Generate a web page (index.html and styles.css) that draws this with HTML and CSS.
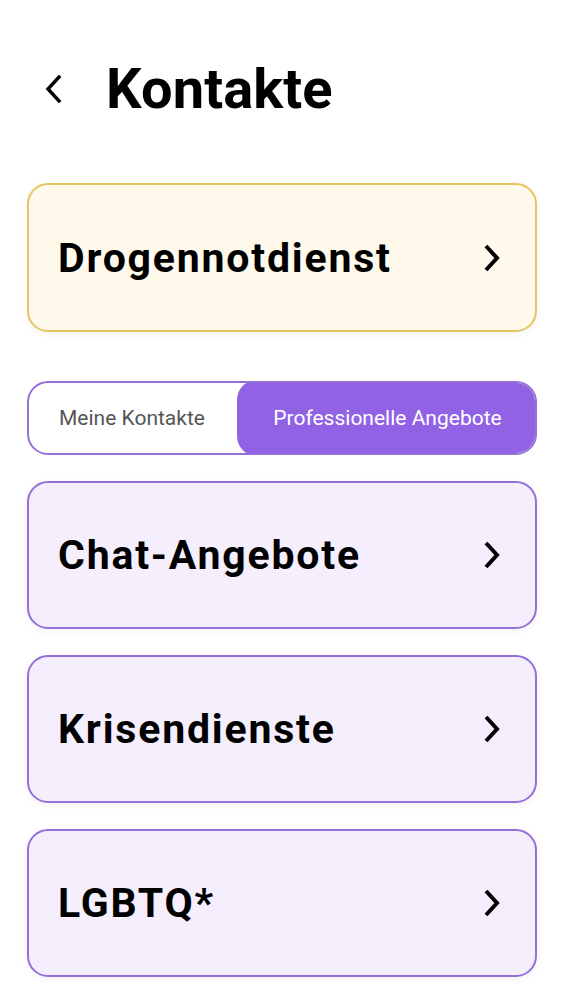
FILE: index.html
```html
<!DOCTYPE html>
<html lang="de">
<head>
  <meta charset="UTF-8" />
  <meta name="viewport" content="width=device-width, initial-scale=1.0"/>
  <title>Kontakte</title>
  <link rel="stylesheet" href="styles.css">
</head>
<body>
  <header class="topbar">
    <button class="back" aria-label="Zurück">
      <svg width="20" height="28" viewBox="0 0 20 28"><path d="M16 2 L5 14 L16 26" fill="none" stroke="#000" stroke-width="3.4" stroke-linecap="square"/></svg>
    </button>
    <h1>Kontakte</h1>
  </header>

  <a class="card card-yellow" href="#">
    <span>Drogennotdienst</span>
    <svg class="chev" width="20" height="28" viewBox="0 0 20 28"><path d="M4 2 L15 14 L4 26" fill="none" stroke="#000" stroke-width="4"/></svg>
  </a>

  <div class="tabs">
    <div class="tab">Meine Kontakte</div>
    <div class="tab active">Professionelle Angebote</div>
  </div>

  <a class="card" href="#">
    <span>Chat-Angebote</span>
    <svg class="chev" width="20" height="28" viewBox="0 0 20 28"><path d="M4 2 L15 14 L4 26" fill="none" stroke="#000" stroke-width="4"/></svg>
  </a>
  <a class="card" href="#">
    <span>Krisendienste</span>
    <svg class="chev" width="20" height="28" viewBox="0 0 20 28"><path d="M4 2 L15 14 L4 26" fill="none" stroke="#000" stroke-width="4"/></svg>
  </a>
  <a class="card" href="#">
    <span>LGBTQ*</span>
    <svg class="chev" width="20" height="28" viewBox="0 0 20 28"><path d="M4 2 L15 14 L4 26" fill="none" stroke="#000" stroke-width="4"/></svg>
  </a>
</body>
</html>
```

FILE: styles.css
```css
body {
  margin: 0;
  padding: 0 26px 0 27px;
  background: #fff;
  font-family: Roboto, "Liberation Sans", sans-serif;
  color: #000;
}
.topbar {
  display: flex;
  align-items: center;
  height: 60px;
  margin-top: 59px;
  margin-bottom: 64px;
}
.back {
  border: none;
  background: none;
  padding: 0;
  margin-left: 16px;
  width: 20px;
  height: 28px;
  cursor: pointer;
}
.back svg {
  display: block;
}
h1 {
  margin: 0 0 0 43px;
  font-size: 56px;
  font-weight: 700;
  letter-spacing: 0.1px;
}
.card {
  display: flex;
  align-items: center;
  justify-content: space-between;
  box-sizing: border-box;
  height: 148px;
  padding: 0 33px 0 29px;
  margin-bottom: 26px;
  border: 2.5px solid #9470d8;
  border-radius: 21px;
  background: #f4eefd;
  box-shadow: 0 2px 8px rgba(0,0,0,0.05);
  color: #000;
  text-decoration: none;
  font-size: 41px;
  font-weight: 700;
  letter-spacing: 1.8px;
}
.card-yellow {
  height: 149px;
  border-color: #e6c45e;
  background: #fef9eb;
  margin-bottom: 49px;
}
.chev {
  display: block;
}
.tabs {
  display: flex;
  box-sizing: border-box;
  height: 74px;
  margin-bottom: 26px;
  border: 2.5px solid #9470d8;
  border-radius: 21px;
  overflow: hidden;
  background: #fff;
}
.tab {
  display: flex;
  align-items: center;
  padding: 0 32px 0 30px;
  font-size: 21px;
  color: #555;
}
.tab.active {
  flex: 1;
  justify-content: center;
  margin: -3px -3px -3px 0;
  padding: 0;
  background: #9162e4;
  color: #fff;
  border-radius: 20px;
}
```
